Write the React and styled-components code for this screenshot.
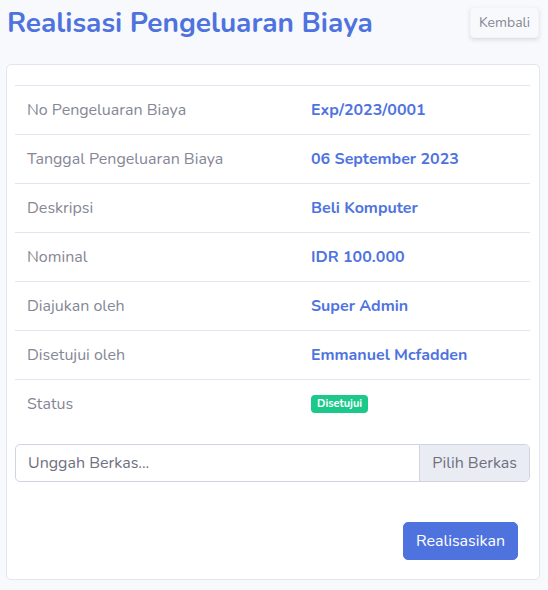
import React from "react";
import styled, { createGlobalStyle } from "styled-components";

const GlobalStyle = createGlobalStyle`
  html, body {
    margin: 0;
    padding: 0;
    background: #f8f9fc;
    font-family: "Nunito", Lato, "Noto Sans", sans-serif;
    color: #858796;
  }
  * { box-sizing: border-box; }
`;

const Page = styled.div`
  padding: 6px 8px 10px 6px;
`;

const Header = styled.div`
  display: flex;
  justify-content: space-between;
  align-items: flex-start;
  height: 58px;
`;

const Title = styled.h1`
  margin: 0;
  padding-left: 1px;
  font-size: 28px;
  font-weight: 700;
  color: #4e73df;
  line-height: 34px;
`;

const BackButton = styled.button`
  margin-top: 1px;
  margin-right: 1px;
  height: 31px;
  padding: 0 8px;
  font-family: inherit;
  font-size: 14px;
  color: #858796;
  background: #f8f9fc;
  border: 1px solid #f3f4f8;
  border-radius: 4px;
  box-shadow: 0 2px 4px rgba(58, 59, 69, 0.15);
`;

const Card = styled.div`
  background: #fff;
  border: 1px solid #e3e6f0;
  border-radius: 5px;
  padding: 20px 9px 19px 8px;
`;

const Table = styled.div`
  border-top: 1px solid #e3e6f0;
`;

const Row = styled.div`
  display: grid;
  grid-template-columns: 284px 1fr;
  border-bottom: ${(p) => (p.last ? "none" : "1px solid #e3e6f0")};
  font-size: 16px;
  line-height: 24px;
`;

const Cell = styled.div`
  padding: 12px;
  color: ${(p) => (p.value ? "#4e73df" : "#858796")};
  font-weight: ${(p) => (p.value ? 700 : 400)};
`;

const Badge = styled.span`
  display: inline-block;
  background: #1cc88a;
  color: #fff;
  font-size: 11px;
  font-weight: 700;
  line-height: 12px;
  padding: 3px 6px;
  border-radius: 4px;
  vertical-align: 2px;
`;

const InputGroup = styled.div`
  display: flex;
  margin-top: 16px;
  height: 38px;
  border: 1px solid #d1d3e2;
  border-radius: 5px;
  overflow: hidden;
  font-size: 16px;
`;

const FileText = styled.div`
  flex: 1;
  display: flex;
  align-items: center;
  padding: 0 12px;
  color: #6e707e;
`;

const FileButton = styled.div`
  display: flex;
  align-items: center;
  padding: 0 12px;
  background: #eaecf4;
  border-left: 1px solid #d1d3e2;
  color: #6e707e;
`;

const Actions = styled.div`
  display: flex;
  justify-content: flex-end;
  padding-right: 12px;
  margin-top: 40px;
`;

const PrimaryButton = styled.button`
  height: 38px;
  padding: 0 12px;
  font-family: inherit;
  font-size: 16px;
  color: #fff;
  background: #4e73df;
  border: 1px solid #4e73df;
  border-radius: 5px;
`;

const rows = [
  ["No Pengeluaran Biaya", "Exp/2023/0001"],
  ["Tanggal Pengeluaran Biaya", "06 September 2023"],
  ["Deskripsi", "Beli Komputer"],
  ["Nominal", "IDR 100.000"],
  ["Diajukan oleh", "Super Admin"],
  ["Disetujui oleh", "Emmanuel Mcfadden"],
];

export default function App() {
  return (
    <Page>
      <GlobalStyle />
      <Header>
        <Title>Realisasi Pengeluaran Biaya</Title>
        <BackButton>Kembali</BackButton>
      </Header>
      <Card>
        <Table>
          {rows.map(([label, value]) => (
            <Row key={label}>
              <Cell>{label}</Cell>
              <Cell value>{value}</Cell>
            </Row>
          ))}
          <Row last>
            <Cell>Status</Cell>
            <Cell>
              <Badge>Disetujui</Badge>
            </Cell>
          </Row>
        </Table>
        <InputGroup>
          <FileText>Unggah Berkas...</FileText>
          <FileButton>Pilih Berkas</FileButton>
        </InputGroup>
        <Actions>
          <PrimaryButton>Realisasikan</PrimaryButton>
        </Actions>
      </Card>
    </Page>
  );
}
